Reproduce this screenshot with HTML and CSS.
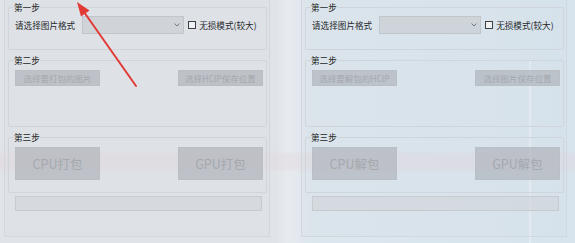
FILE: index.html
```html
<!DOCTYPE html>
<html lang="zh-CN">
<head>
    <meta charset="UTF-8">
    <meta name="viewport" content="width=device-width, initial-scale=1.0">
    <title>HCIP 打包工具</title>
    <link rel="stylesheet" href="styles.css">
</head>
<body>
    <div class="app">
        <div class="panel">
            <fieldset class="group step-one">
                <legend>第一步</legend>
                <div class="row">
                    <span class="label">请选择图片格式</span>
                    <div class="select">
                        <svg class="caret" width="6" height="4" viewBox="0 0 6 4"><path d="M0.5 0.5 L3 3 L5.5 0.5" fill="none" stroke="#6b6f74" stroke-width="0.9"/></svg>
                    </div>
                    <span class="check"></span>
                    <span class="label">无损模式(较大)</span>
                </div>
            </fieldset>
            <fieldset class="group step-two">
                <legend>第二步</legend>
                <div class="buttons">
                    <button class="small-button">选择要打包的图片</button>
                    <button class="small-button">选择HCIP保存位置</button>
                </div>
            </fieldset>
            <fieldset class="group step-three">
                <legend>第三步</legend>
                <div class="buttons">
                    <button class="big-button">CPU打包</button>
                    <button class="big-button">GPU打包</button>
                </div>
            </fieldset>
            <div class="progress"></div>
        </div>

        <div class="panel">
            <fieldset class="group step-one">
                <legend>第一步</legend>
                <div class="row">
                    <span class="label">请选择图片格式</span>
                    <div class="select">
                        <svg class="caret" width="6" height="4" viewBox="0 0 6 4"><path d="M0.5 0.5 L3 3 L5.5 0.5" fill="none" stroke="#6b6f74" stroke-width="0.9"/></svg>
                    </div>
                    <span class="check"></span>
                    <span class="label">无损模式(较大)</span>
                </div>
            </fieldset>
            <fieldset class="group step-two">
                <legend>第二步</legend>
                <div class="buttons">
                    <button class="small-button">选择要解包的HCIP</button>
                    <button class="small-button">选择图片保存位置</button>
                </div>
            </fieldset>
            <fieldset class="group step-three">
                <legend>第三步</legend>
                <div class="buttons">
                    <button class="big-button">CPU解包</button>
                    <button class="big-button">GPU解包</button>
                </div>
            </fieldset>
            <div class="progress"></div>
        </div>
    </div>

    <svg class="arrow" width="575" height="243" viewBox="0 0 575 243">
        <line x1="136" y1="86" x2="84" y2="12" stroke="#e23a34" stroke-width="2" stroke-linecap="round"/>
        <polygon points="77,2 89.5,10.5 81,16.5" fill="#e23a34"/>
    </svg>
</body>
</html>
```

FILE: styles.css
```css
body {
    margin: 0;
    width: 575px;
    height: 243px;
    overflow: hidden;
    position: relative;
    font-family: "Noto Sans CJK SC", "Noto Sans", sans-serif;
    color: #26282b;
    background:
        linear-gradient(180deg, rgba(255, 255, 255, 0) 60px, rgba(255, 255, 255, 0.3) 61px) 529px 0 / 2px 243px no-repeat,
        linear-gradient(180deg, rgba(228, 208, 214, 0) 150px, rgba(228, 208, 214, 0.3) 155px, rgba(228, 208, 214, 0.3) 168px, rgba(228, 208, 214, 0) 173px),
        linear-gradient(90deg, #e0e3e8 0%, #e0e4e9 48%, #e7ebef 50%, #dce6ed 54%, #d7e4ed 100%);
}
.app {
    display: flex;
    gap: 31px;
    padding-left: 4px;
    margin-top: -1px;
}
.panel {
    width: 266px;
    height: 238px;
    box-sizing: border-box;
    border: 1px solid #d1d7dd;
    padding: 0 2px 0 3px;
    background-color: rgba(210, 214, 220, 0.12);
}
.group {
    margin: 0;
    border: 1px solid #cfd5db;
    border-radius: 2px;
    padding: 5px 3px 0 6px;
    min-width: 0;
}
.group legend {
    padding: 0;
    margin-left: -1px;
    font-size: 8.6px;
    line-height: 10px;
    color: #1d1f22;
}
.step-one {
    margin-top: 2px;
    padding-top: 4px;
    padding-bottom: 15px;
}
.step-two {
    margin-top: 5px;
    padding-bottom: 40px;
}
.step-three {
    margin-top: 5px;
    padding-bottom: 12px;
}
.row {
    display: flex;
    align-items: center;
    height: 18px;
}
.label {
    font-size: 8.6px;
    line-height: 10px;
    white-space: nowrap;
}
.select {
    width: 102px;
    height: 18px;
    box-sizing: border-box;
    margin-left: 7px;
    border: 1px solid #c1c6cb;
    background-color: rgba(200, 204, 209, 0.65);
    display: flex;
    align-items: center;
    justify-content: flex-end;
    padding-right: 3px;
}
.check {
    width: 8px;
    height: 8px;
    box-sizing: border-box;
    margin: 0 3px 0 4px;
    border: 1px solid #3c3f43;
    background-color: #eef0f2;
}
.buttons {
    display: flex;
    justify-content: space-between;
}
.small-button, .big-button {
    width: 85px;
    margin: 0;
    padding: 0;
    border: 1px solid #babfc4;
    background-color: rgba(168, 174, 180, 0.6);
    color: #a4a9ae;
    font-family: "Noto Sans CJK SC", "Noto Sans", sans-serif;
    white-space: nowrap;
}
.small-button {
    height: 16px;
    font-size: 8.5px;
    line-height: 14px;
}
.big-button {
    height: 33px;
    font-size: 12.5px;
}
.progress {
    height: 15px;
    box-sizing: border-box;
    margin: 3px 5px 0 7px;
    border: 1px solid #c6cbd0;
    background-color: rgba(208, 212, 217, 0.6);
}
.arrow {
    position: absolute;
    top: 0;
    left: 0;
    pointer-events: none;
}
```
